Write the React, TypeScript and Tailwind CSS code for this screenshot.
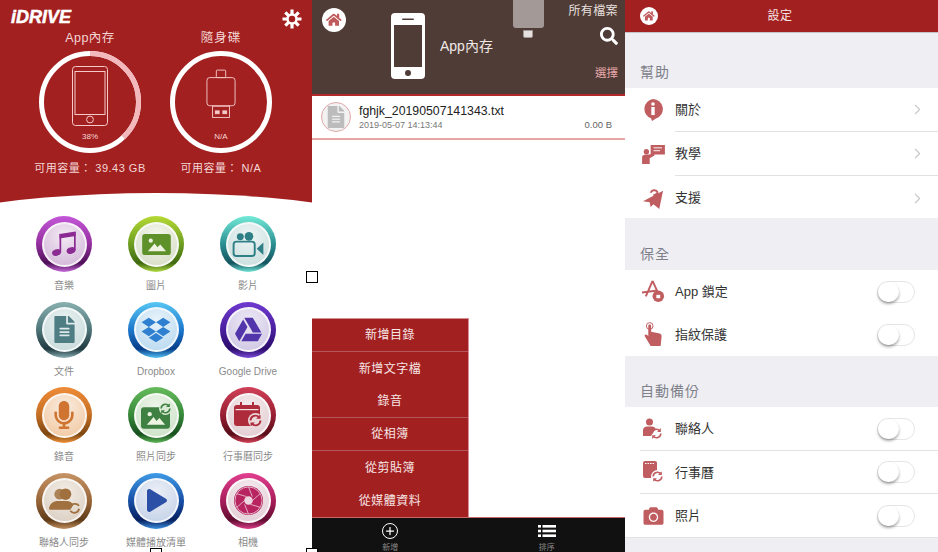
import { ChevronRight, Plus } from 'lucide-react';
import {
  FaCamera,
  FaDropbox,
  FaFileAlt,
  FaGoogleDrive,
  FaHome,
  FaMicrophone,
  FaPlay,
  FaSearch,
} from 'react-icons/fa';

const Sync = ({ className = '' }: { className?: string }) => (
  <svg viewBox="0 0 24 24" className={className} fill="none" stroke="currentColor" strokeWidth="3">
    <path d="M4 12a8 8 0 0 1 14-5" />
    <path d="M20 12a8 8 0 0 1-14 5" />
    <path d="M20 2v7h-7" fill="currentColor" stroke="none" />
    <path d="M4 22v-7h7" fill="currentColor" stroke="none" />
  </svg>
);

const MusicIcon = () => (
  <svg viewBox="0 0 26 26" className="h-[26px] w-[26px] text-[#8c2a93]" fill="currentColor">
    <ellipse cx="5.500" cy="21.500" rx="4.500" ry="3.300" transform="rotate(-20 5.500 21.500)" />
    <ellipse cx="20" cy="19.500" rx="4.500" ry="3.300" transform="rotate(-20 20 19.500)" />
    <rect x="8.500" y="3" width="1.700" height="18.500" />
    <rect x="23" y="1" width="1.700" height="18.500" />
    <path d="M8.500 3L24.700 0.500V5L8.500 7.500z" />
  </svg>
);

const VideoIcon = () => (
  <svg viewBox="0 0 32 26" className="h-[25px] w-[32px] text-[#2f7f87]">
    <circle cx="8" cy="5" r="3.600" fill="currentColor" />
    <circle cx="17" cy="4.500" r="4.500" fill="currentColor" />
    <rect x="1" y="10" width="22" height="15" rx="3" fill="none" stroke="currentColor" strokeWidth="2" />
    <path d="M25 17.500L32 11v13z" fill="currentColor" />
  </svg>
);

const PictureIcon = ({ className = '' }: { className?: string }) => (
  <svg viewBox="0 0 30 22" className={className}>
    <rect width="30" height="22" rx="3" fill="currentColor" />
    <circle cx="9" cy="7" r="2.200" fill="#eef3e2" />
    <path d="M6 18l7-8 3 4 3-3 6 7z" fill="#eef3e2" />
  </svg>
);

const PhotoSync = () => (
  <div className="relative h-[27px] w-[31px] text-[#3f8142]">
    <PictureIcon className="absolute bottom-0 left-0 h-[22px] w-[29px]" />
    <Sync className="absolute right-0 top-0 h-[13px] w-[13px] rounded-full bg-[#dcebd8]" />
  </div>
);

const CalendarSync = () => (
  <div className="relative h-[26px] w-[29px] text-[#ae2b3c]">
    <svg viewBox="0 0 26 24" className="h-[24px] w-[26px]">
      <rect y="3" width="26" height="21" rx="3" fill="currentColor" />
      <rect x="1.500" y="7" width="23" height="1.200" fill="#f3dfe2" />
      <rect x="6" width="2" height="6" fill="currentColor" />
      <rect x="18" width="2" height="6" fill="currentColor" />
    </svg>
    <Sync className="absolute bottom-0 right-0 h-[15px] w-[15px] rounded-full bg-[#ecd9dc]" />
  </div>
);

const PeopleSync = () => (
  <svg viewBox="0 0 34 26" className="h-[26px] w-[33px] text-[#a0703f]">
    <circle cx="12" cy="6" r="5.500" fill="currentColor" opacity="0.85" />
    <circle cx="18" cy="6" r="6" fill="currentColor" />
    <path d="M1 21c1-6 5-8 9-8h9c4 0 6 2 7 4l-3 5H2z" fill="currentColor" />
    <path d="M23 20a5 5 0 0 1 9-2M32 21a5 5 0 0 1-9 2" fill="none" stroke="currentColor" strokeWidth="1.800" />
  </svg>
);

const Aperture = () => (
  <svg viewBox="0 0 32 32" className="h-[31px] w-[31px] text-[#b8245f]" fill="none">
    <circle cx="16" cy="16" r="15" fill="currentColor" />
    <circle cx="16" cy="16" r="4.400" fill="#ecd6df" />
    <g stroke="#ecd6df" strokeWidth="0.800">
      <circle cx="16" cy="16" r="14" />
      <path d="M16 2l4 10M28 9l-8 7M28 23l-10-3M16 30l-4-10M4 23l8-7M4 9l10 3" />
    </g>
  </svg>
);

const apps = [
  {
    label: '音樂',
    ring: 'bg-[linear-gradient(180deg,#c456d8_0%,#94309f_50%,#4f0f58_84%,#c76cdb_100%)]',
    inner: 'bg-[radial-gradient(circle_at_50%_30%,#f3e9f4,#cfb2d6)]',
    icon: <MusicIcon />,
  },
  {
    label: '圖片',
    ring: 'bg-[linear-gradient(180deg,#b5d934_0%,#6f9e22_50%,#3f6a10_84%,#b3dd45_100%)]',
    inner: 'bg-[radial-gradient(circle_at_50%_30%,#f4f6ec,#d3dcc3)]',
    icon: <PictureIcon className="h-[21px] w-[29px] text-[#5f912b]" />,
  },
  {
    label: '影片',
    ring: 'bg-[linear-gradient(180deg,#73ead8_0%,#2a8f92_50%,#14555f_84%,#72e6d8_100%)]',
    inner: 'bg-[radial-gradient(circle_at_50%_30%,#edf5f4,#c6dcdb)]',
    icon: <VideoIcon />,
  },
  {
    label: '文件',
    ring: 'bg-[linear-gradient(180deg,#88b0b0_0%,#4d7478_50%,#203a40_84%,#8bb1b4_100%)]',
    inner: 'bg-[radial-gradient(circle_at_50%_30%,#e9f1f1,#c5d8d9)]',
    icon: <FaFileAlt className="h-[27px] w-[21px] text-[#4f7d84]" />,
  },
  {
    label: 'Dropbox',
    ring: 'bg-[linear-gradient(180deg,#58c6f4_0%,#1d78cc_50%,#063d8a_84%,#55c4f5_100%)]',
    inner: 'bg-[radial-gradient(circle_at_50%_30%,#e9f4fb,#b4d6ee)]',
    icon: <FaDropbox className="h-[28px] w-[30px] text-[#2f80d0]" />,
  },
  {
    label: 'Google Drive',
    ring: 'bg-[linear-gradient(180deg,#6f3ad0_0%,#4a1f9e_50%,#2b0c6c_84%,#7c4cd8_100%)]',
    inner: 'bg-[radial-gradient(circle_at_50%_30%,#ece8f5,#cdc4e2)]',
    icon: <FaGoogleDrive className="h-[27px] w-[29px] text-[#5335ab]" />,
  },
  {
    label: '錄音',
    ring: 'bg-[linear-gradient(180deg,#ee8b38_0%,#c66f24_50%,#7c4712_84%,#f09238_100%)]',
    inner: 'bg-[radial-gradient(circle_at_50%_30%,#f9ece0,#f1c59b)]',
    icon: <FaMicrophone className="h-[28px] w-[20px] text-[#cf7431]" />,
  },
  {
    label: '照片同步',
    ring: 'bg-[linear-gradient(180deg,#66bb5c_0%,#37893a_50%,#174f1e_84%,#60b857_100%)]',
    inner: 'bg-[radial-gradient(circle_at_50%_30%,#edf5ea,#c9e0c4)]',
    icon: <PhotoSync />,
  },
  {
    label: '行事曆同步',
    ring: 'bg-[linear-gradient(180deg,#d14158_0%,#981f33_50%,#590d18_84%,#d5425a_100%)]',
    inner: 'bg-[radial-gradient(circle_at_50%_30%,#f5ecee,#e0c9ce)]',
    icon: <CalendarSync />,
  },
  {
    label: '聯絡人同步',
    ring: 'bg-[linear-gradient(180deg,#c79365_0%,#976638_50%,#5e3b17_84%,#c39160_100%)]',
    inner: 'bg-[radial-gradient(circle_at_50%_30%,#f3eee8,#d8cbbc)]',
    icon: <PeopleSync />,
  },
  {
    label: '媒體播放清單',
    ring: 'bg-[linear-gradient(180deg,#3f9be6_0%,#174fa6_50%,#06205f_84%,#3d92e2_100%)]',
    inner: 'bg-[radial-gradient(circle_at_50%_30%,#ecf0f7,#bfcee6)]',
    icon: <FaPlay className="ml-[2px] h-[25px] w-[20px] text-[#2b50a5]" />,
  },
  {
    label: '相機',
    ring: 'bg-[linear-gradient(180deg,#e23f90_0%,#a81d5a_50%,#600c2f_84%,#dd3d8a_100%)]',
    inner: 'bg-[radial-gradient(circle_at_50%_30%,#f5edf0,#e2cbd4)]',
    icon: <Aperture />,
  },
];

const Gear = () => (
  <svg viewBox="0 0 20 20" className="h-[20px] w-[20px]" fill="none" stroke="#fff">
    <circle cx="10" cy="10" r="4.500" strokeWidth="2.500" />
    <path
      d="M10 0.500v5M10 14.500v5M0.500 10h5M14.500 10h5M3.300 3.300l3.500 3.500M13.200 13.200l3.500 3.500M16.700 3.300l-3.500 3.500M6.800 13.200l-3.500 3.500"
      strokeWidth="3.200"
    />
  </svg>
);

const Gauge = ({ percent, children }: { percent: number; children: React.ReactNode }) => (
  <div className="relative flex h-[102px] w-[102px] justify-center">
    <svg viewBox="0 0 102 102" className="absolute inset-0 h-full w-full -rotate-90">
      <circle cx="51" cy="51" r="48.500" fill="none" stroke="#fff" strokeWidth="5" />
      <circle
        cx="51"
        cy="51"
        r="48.500"
        fill="none"
        stroke="#f2b8bb"
        strokeWidth="5"
        pathLength="100"
        strokeDasharray={`${percent} 100`}
      />
    </svg>
    {children}
  </div>
);

const HomeBadge = ({ size, color }: { size: string; color: string }) => (
  <div className={`flex items-center justify-center rounded-full bg-white ${size}`}>
    <FaHome className={`h-[65%] w-[65%] ${color}`} />
  </div>
);

const StoragePanel = () => (
  <div className="flex w-[312px] flex-col">
    <div className="relative h-[208px] shrink-0 overflow-hidden bg-[#a32020]">
      <div className="flex items-start justify-between pl-[11px] pr-[10px] pt-[6px]">
        <span className="text-[18px] font-bold italic leading-[22px] text-white [-webkit-text-stroke:0.5px_white]">
          iDRIVE
        </span>
        <div className="mt-[3px]">
          <Gear />
        </div>
      </div>
      <div className="grid grid-cols-[131px_131px] pl-[39px] text-[#f3d6d6]">
        <div className="flex w-[102px] flex-col items-center">
          <span className="text-[12.500px] leading-[18px] tracking-[0.5px]">App內存</span>
          <div className="mt-[4px]">
            <Gauge percent={38}>
              <div className="flex flex-col items-center pt-[15px]">
                <svg viewBox="0 0 36 60" className="h-[60px] w-[36px]" fill="none" stroke="#f3c9c9" strokeWidth="1">
                  <rect x="0.500" y="0.500" width="35" height="59" rx="3" />
                  <rect x="3" y="5.500" width="30" height="43" />
                  <circle cx="18" cy="53.500" r="3.400" />
                </svg>
                <span className="mt-[5px] text-[8px] leading-[12px]">38%</span>
              </div>
            </Gauge>
          </div>
          <span className="mt-[7px] whitespace-nowrap text-[11px] leading-[16px] tracking-[0.5px]">
            可用容量： 39.43 GB
          </span>
        </div>
        <div className="flex w-[102px] flex-col items-center">
          <span className="text-[12.500px] leading-[18px] tracking-[1px]">隨身碟</span>
          <div className="mt-[4px]">
            <Gauge percent={0}>
              <div className="flex flex-col items-center pt-[17px]">
                <svg viewBox="0 0 32 52" className="h-[52px] w-[30px]" fill="none" stroke="#f3c9c9" strokeWidth="1">
                  <rect x="11" y="0.500" width="10" height="8" rx="1" />
                  <rect x="1" y="8.500" width="30" height="30" rx="3" />
                  <rect x="7" y="39" width="18" height="12" />
                  <rect x="10" y="44" width="4" height="3" fill="#f3c9c9" />
                  <rect x="18" y="44" width="4" height="3" fill="#f3c9c9" />
                </svg>
                <span className="mt-[11px] text-[8px] leading-[12px]">N/A</span>
              </div>
            </Gauge>
          </div>
          <span className="mt-[7px] whitespace-nowrap text-[11px] leading-[16px] tracking-[0.5px]">
            可用容量： N/A
          </span>
        </div>
      </div>
      <div className="absolute left-[-134px] top-[193px] h-[120px] w-[580px] rounded-[50%] bg-white" />
    </div>
    <div className="ml-[18px] mt-[8px] grid grid-cols-[92px_92px_92px]">
      {apps.map((app) => (
        <div key={app.label} className="flex h-[85.500px] flex-col items-center">
          <div className={`flex h-[56px] w-[56px] items-center justify-center rounded-full ${app.ring}`}>
            <div
              className={`flex h-[45px] w-[45px] items-center justify-center rounded-full border-[2px] border-white/75 ${app.inner}`}
            >
              {app.icon}
            </div>
          </div>
          <span className="mt-[7px] whitespace-nowrap text-[10px] leading-[14px] text-[#8a8a8a]">{app.label}</span>
        </div>
      ))}
    </div>
  </div>
);

const menuItems = [
  { label: '新增目錄', line: true },
  { label: '新增文字檔', line: false },
  { label: '錄音', line: true },
  { label: '從相簿', line: true },
  { label: '從剪貼簿', line: false },
  { label: '從媒體資料', line: false },
];

const FilesPanel = () => (
  <div className="flex w-[313px] flex-col bg-white">
    <div className="flex h-[96px] shrink-0 border-b-2 border-[#b3292b] bg-[#4f3c37] pl-[10px] pr-[7px]">
      <div className="mt-[8px]">
        <HomeBadge size="h-[24px] w-[24px]" color="text-[#c0595c]" />
      </div>
      <svg viewBox="0 0 34 66" className="ml-[45px] mt-[13px] h-[66px] w-[34px]">
        <rect width="34" height="66" rx="4" fill="#fff" />
        <rect x="3" y="12" width="28" height="42" fill="#4f3c37" />
        <rect x="11" y="5.500" width="12" height="1.600" rx="0.800" fill="#4f3c37" />
        <circle cx="17" cy="60" r="3" fill="#4f3c37" />
      </svg>
      <span className="ml-[15px] mt-[36px] text-[14px] leading-[20px] text-[#f0e8e6]">App內存</span>
      <div className="ml-[20px] flex flex-col items-center">
        <div className="h-[28px] w-[31px] rounded-b-[3px] bg-[#a39997]" />
        <div className="mt-[2px] h-[8px] w-[10px] rounded-b-[2px] border border-[#a39997] bg-[#e6e0de]" />
      </div>
      <div className="ml-auto flex flex-col items-end">
        <span className="mt-[3px] text-[12px] leading-[16px] tracking-[0.4px] text-[#e8e0de]">所有檔案</span>
        <FaSearch className="mt-[8px] h-[18px] w-[18px] text-white" />
        <span className="mt-[20px] text-[11.500px] leading-[16px] text-[#e9a9a9]">選擇</span>
      </div>
    </div>
    <div className="flex h-[44px] shrink-0 items-center border-b-2 border-[#e8a5a5] pl-[9px] pr-[13px]">
      <div className="flex h-[30px] w-[30px] items-center justify-center rounded-full border border-[#e0a8a8] bg-[#f2f2f2]">
        <FaFileAlt className="h-[22px] w-[20px] text-[#bcbcbc]" />
      </div>
      <div className="ml-[8px] flex flex-1 flex-col">
        <span className="text-[12.300px] leading-[16px] text-[#222]">fghjk_20190507141343.txt</span>
        <div className="flex items-end justify-between">
          <span className="text-[9px] leading-[12px] text-[#777]">2019-05-07 14:13:44</span>
          <span className="text-[9.500px] leading-[12px] text-[#666]">0.00 B</span>
        </div>
      </div>
    </div>
    <div className="flex flex-1 flex-col justify-end">
      <div className="w-[157px] border-r border-t border-[#d58f96] bg-[#a32020]">
        {menuItems.map((item) => (
          <div
            key={item.label}
            className={`flex h-[33px] items-center justify-center text-[12px] tracking-[0.5px] text-[#f6e6e6] ${
              item.line ? 'border-b border-[#b5565a]' : ''
            }`}
          >
            {item.label}
          </div>
        ))}
      </div>
    </div>
    <div className="grid h-[35px] shrink-0 grid-cols-2 border-t border-[#c66] bg-[#111]">
      <div className="flex flex-col items-center pt-[5px]">
        <div className="flex h-[16px] w-[16px] shrink-0 items-center justify-center rounded-full border-[1.500px] border-white">
          <Plus className="h-[12px] w-[12px] text-white" strokeWidth={2.5} />
        </div>
        <span className="mt-[5px] text-[8px] leading-[8px] text-[#888]">新增</span>
      </div>
      <div className="flex flex-col items-center pt-[5px]">
        <svg viewBox="0 0 18 12" className="mt-[2px] h-[12px] w-[18px] shrink-0" fill="#fff">
          <rect width="3" height="2.600" />
          <rect x="4.500" width="13.500" height="2.600" />
          <rect y="4.700" width="3" height="2.600" />
          <rect x="4.500" y="4.700" width="13.500" height="2.600" />
          <rect y="9.400" width="3" height="2.600" />
          <rect x="4.500" y="9.400" width="13.500" height="2.600" />
        </svg>
        <span className="mt-[7px] text-[8px] leading-[8px] text-[#888]">排序</span>
      </div>
    </div>
  </div>
);

const tint = '#c05d60';

const settingIcons: Record<string, React.ReactNode> = {
  about: (
    <svg viewBox="0 0 22 22" className="h-[22px] w-[22px]">
      <path d="M11 0a10 10 0 0 1 3 19.500L10 22l-1-2.700A10 10 0 0 1 11 0z" fill={tint} />
      <circle cx="11" cy="5" r="1.800" fill="#fff" />
      <rect x="9.300" y="8" width="3.400" height="8" fill="#fff" />
    </svg>
  ),
  tutorial: (
    <svg viewBox="0 0 24 20" className="h-[19px] w-[23px]">
      <path d="M9 0h15v10H13l-3 2v-2H9z" fill={tint} />
      <path d="M12 3h9M12 6h7" stroke="#fff" strokeWidth="1" />
      <circle cx="4.500" cy="7" r="2.800" fill={tint} />
      <path d="M0 20v-7c0-2 2-3 4-3h3l6-1v2l-5 3v6z" fill={tint} />
    </svg>
  ),
  support: (
    <svg viewBox="0 0 22 22" className="h-[21px] w-[21px]">
      <path d="M21 3L17 22l-6-5-3 3-1-5-7-1z" fill={tint} />
      <path d="M8 5a4 4 0 0 1 7-1c1 2-2 3-4 4" fill="none" stroke={tint} strokeWidth="2" />
    </svg>
  ),
  lock: (
    <svg viewBox="0 0 24 24" className="h-[23px] w-[23px]">
      <path d="M11 1L4 17M11 1l6 13M0 13l16-2" stroke={tint} strokeWidth="2" fill="none" />
      <circle cx="17" cy="17" r="6" fill={tint} />
      <rect x="15" y="15.500" width="4" height="3.500" fill="#fff" />
    </svg>
  ),
  finger: (
    <svg viewBox="0 0 20 26" className="h-[25px] w-[19px]">
      <circle cx="6" cy="4" r="3.500" fill="none" stroke={tint} strokeWidth="1" />
      <path
        d="M4.500 4c0-2 3-2 3 0v6l9 2c1.500 .5 2 1 2 3l-1 10H7L1 15c-1-2 1-3 3-1l.5 1z"
        fill={tint}
      />
    </svg>
  ),
  contacts: (
    <div className="relative h-[22px] w-[20px] text-[#c05d60]">
      <svg viewBox="0 0 20 22" className="h-[22px] w-[20px]">
        <circle cx="6.500" cy="4" r="3.500" fill={tint} />
        <path d="M0 18v-6c0-2 2-3.500 4-3.500h5c2 0 3 1 3.500 2L8 18z" fill={tint} />
      </svg>
      <Sync className="absolute bottom-0 right-0 h-[13px] w-[13px]" />
    </div>
  ),
  calendar: (
    <div className="relative h-[22px] w-[20px] text-[#c05d60]">
      <svg viewBox="0 0 14 17" className="h-[17px] w-[14px]">
        <rect width="14" height="17" rx="2" fill={tint} />
        <path d="M2 2.500h10" stroke="#fff" strokeWidth="1" strokeDasharray="1.500 1" />
      </svg>
      <Sync className="absolute bottom-0 right-[-1px] h-[13px] w-[13px] rounded-full bg-white" />
    </div>
  ),
  photo: <FaCamera className="h-[20px] w-[21px] text-[#c05d60]" />,
};

const NavRow = ({ icon, label, last }: { icon: string; label: string; last?: boolean }) => (
  <div className="flex h-[44px] items-center pl-[15px]">
    <div className="flex w-[26px] justify-center">{settingIcons[icon]}</div>
    <div
      className={`ml-[9px] flex h-full flex-1 items-center justify-between pr-[12px] ${
        last ? '' : 'border-b border-[#e2e2e5]'
      }`}
    >
      <span className="text-[13px] text-[#333]">{label}</span>
      <ChevronRight className="h-[17px] w-[17px] text-[#c7c7cc]" strokeWidth={1.5} />
    </div>
  </div>
);

const SwitchRow = ({ icon, label, line, height }: { icon: string; label: string; line?: boolean; height: string }) => (
  <div className={`relative flex items-center pl-[15px] pr-[23px] ${height}`}>
    <div className="flex w-[26px] justify-center">{settingIcons[icon]}</div>
    <span className="ml-[9px] flex-1 text-[13px] text-[#333]">{label}</span>
    <div className="h-[22px] w-[38px] rounded-full border border-[#e5e5e5] bg-white">
      <div className="h-[20px] w-[21px] rounded-full bg-white shadow-[0_2px_3px_rgba(0,0,0,0.35)]" />
    </div>
    {line && <div className="absolute bottom-0 left-[15px] right-0 h-px bg-[#e2e2e5]" />}
  </div>
);

const SectionTitle = ({ children, top }: { children: React.ReactNode; top: string }) => (
  <div className={`pl-[15px] text-[14px] leading-[20px] tracking-[1px] text-[#80808a] ${top}`}>{children}</div>
);

const SettingsPanel = () => (
  <div className="flex w-[313px] flex-col bg-[#eeeef3]">
    <div className="relative flex h-[33px] shrink-0 items-center justify-center border-b border-[#c8c4c6] bg-[#a32020] pr-[3px]">
      <div className="absolute left-[15px] top-[7px]">
        <HomeBadge size="h-[18px] w-[18px]" color="text-[#c0595c]" />
      </div>
      <span className="text-[12px] tracking-[0.5px] text-[#f6e6e6]">設定</span>
    </div>
    <SectionTitle top="mt-[29px] mb-[6px]">幫助</SectionTitle>
    <div className="h-[130px] shrink-0 overflow-hidden bg-white">
      <NavRow icon="about" label="關於" />
      <NavRow icon="tutorial" label="教學" />
      <NavRow icon="support" label="支援" last />
    </div>
    <SectionTitle top="mt-[26px] mb-[6px]">保全</SectionTitle>
    <div className="shrink-0 bg-white">
      <SwitchRow icon="lock" label="App 鎖定" height="h-[43px]" />
      <SwitchRow icon="finger" label="指紋保護" height="h-[43px]" />
    </div>
    <SectionTitle top="mt-[25px] mb-[6px]">自動備份</SectionTitle>
    <div className="shrink-0 border-b border-[#e2e2e5] bg-white">
      <SwitchRow icon="contacts" label="聯絡人" line height="h-[43.500px]" />
      <SwitchRow icon="calendar" label="行事曆" line height="h-[43.500px]" />
      <SwitchRow icon="photo" label="照片" height="h-[43px]" />
    </div>
  </div>
);

export default function App() {
  return (
    <div className="relative flex h-[552px] w-[938px] overflow-hidden bg-white font-['Liberation_Sans','Noto_Sans_CJK_TC',sans-serif]">
      <StoragePanel />
      <FilesPanel />
      <SettingsPanel />
      {/* selection handles on top of the screenshots */}
      <div className="absolute left-[306px] top-[271px] h-[12px] w-[12px] border border-black bg-white" />
      <div className="absolute left-[150px] top-[548px] h-[12px] w-[12px] border border-black bg-white" />
      <div className="absolute left-[306px] top-[548px] h-[12px] w-[12px] border border-black bg-white" />
    </div>
  );
}
